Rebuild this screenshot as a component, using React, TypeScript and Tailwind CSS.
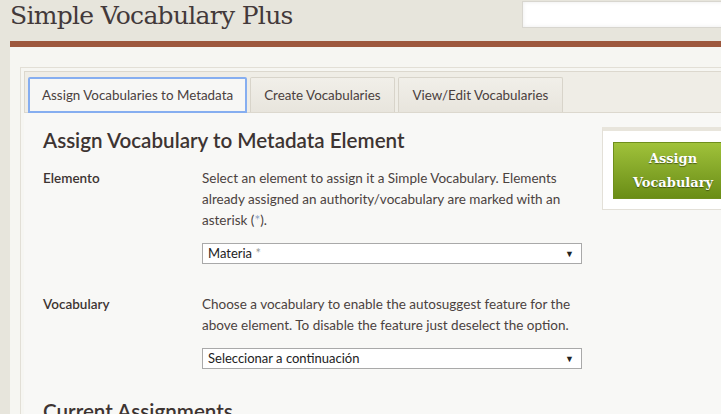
import React from "react";

const body = { fontFamily: "Lato, 'Open Sans', sans-serif" };
const slab = { fontFamily: "'DejaVu Serif', 'Liberation Serif', serif" };

function Select({ value, star }: { value: string; star?: boolean }) {
  return (
    <div className="mt-[12px] w-[380px] h-[21px] border border-[#a9a9a9] bg-white flex items-center pl-[5px] pr-[7px] text-[13px] text-[#222]">
      <span className="flex-1">
        {value}
        {star && <span className="text-[#999]"> *</span>}
      </span>
      <span className="text-[9px] text-[#222]">▼</span>
    </div>
  );
}

export default function App() {
  return (
    <div className="w-[721px] h-[414px] overflow-hidden bg-[#e7e5dc]" style={body}>
      <div className="flex h-[41px] overflow-hidden">
        <div className="pl-[10px] text-[25px] leading-[31px] text-[#43393a] whitespace-nowrap tracking-[-0.7px]" style={slab}>
          Simple Vocabulary Plus
        </div>
        <div className="ml-auto pt-[1px] shrink-0 w-[199px]">
          <div className="w-[230px] h-[27px] bg-white border border-[#d8d6cf] shadow-[inset_0_0_4px_rgba(0,0,0,0.08)]" />
        </div>
      </div>
      <div className="ml-[10px] h-[6px] bg-[#9d583d]" />
      <div className="ml-[10px] bg-[#f6f6f2] pt-[20px] pl-[10px] h-[400px]">
        <div className="border border-[#e2dfd6] border-r-0 pt-[3px] pl-[3px] h-full">
          <div className="bg-[#efede6] border border-[#dcd8ce] border-r-0 h-[42px] flex items-end gap-[3px] pl-[3px] text-[13.4px]">
            <div className="h-[36px] px-[12px] flex items-center text-[#4a403d] bg-[#f7f7f5] border-2 border-[#86aef0] rounded-t-[2px] mb-[-1px]">
              Assign Vocabularies to Metadata
            </div>
            <div className="h-[35px] px-[13px] flex items-center text-[#4a403d] bg-gradient-to-b from-[#f1efe9] to-[#e8e5dd] border border-[#d8d4ca] border-b-0 rounded-t-[2px]">
              Create Vocabularies
            </div>
            <div className="h-[35px] px-[14px] flex items-center text-[#4a403d] bg-gradient-to-b from-[#f1efe9] to-[#e8e5dd] border border-[#d8d4ca] border-b-0 rounded-t-[2px]">
              View/Edit Vocabularies
            </div>
          </div>
          <div className="bg-[#f8f8f6] flex pl-[19px] pt-[14px] gap-[20px] h-full">
            <div className="w-[539px] shrink-0">
              <h1 className="text-[20.6px] leading-[26px] font-semibold text-[#3d3432] whitespace-nowrap">
                Assign Vocabulary to Metadata Element
              </h1>
              <div className="flex mt-[15px] text-[13.5px] leading-[21px] text-[#4b4240]">
                <div className="w-[159px] shrink-0 font-semibold text-[#3d3432]">Elemento</div>
                <div>
                  <p className="whitespace-nowrap">
                    Select an element to assign it a Simple Vocabulary. Elements
                    <br />
                    already assigned an authority/vocabulary are marked with an
                    <br />
                    asterisk (<span className="text-[#8aa0c0]">*</span>).
                  </p>
                  <Select value="Materia" star />
                </div>
              </div>
              <div className="flex mt-[30px] text-[13.5px] leading-[21px] text-[#4b4240]">
                <div className="w-[159px] shrink-0 font-semibold text-[#3d3432]">Vocabulary</div>
                <div>
                  <p className="whitespace-nowrap">
                    Choose a vocabulary to enable the autosuggest feature for the
                    <br />
                    above element. To disable the feature just deselect the option.
                  </p>
                  <Select value="Seleccionar a continuación" />
                </div>
              </div>
              <h2 className="mt-[29px] text-[20.6px] leading-[26px] font-semibold text-[#3d3432]">
                Current Assignments
              </h2>
            </div>
            <div className="shrink-0">
              <div className="w-[150px] bg-white border border-[#e3e0d8] border-t-[4px] border-t-[#e8e5dc] pt-[11px] pl-[10px] pb-[10px]">
                <div
                  className="w-[120px] h-[57px] flex flex-col items-center justify-center text-white text-[13px] leading-[24px] font-bold bg-gradient-to-b from-[#a0c23a] to-[#6a8d15] border border-[#6f8f1c] [text-shadow:0_1px_1px_rgba(0,0,0,0.45)]"
                  style={slab}
                >
                  <span>Assign</span>
                  <span>Vocabulary</span>
                </div>
              </div>
            </div>
          </div>
        </div>
      </div>
    </div>
  );
}
